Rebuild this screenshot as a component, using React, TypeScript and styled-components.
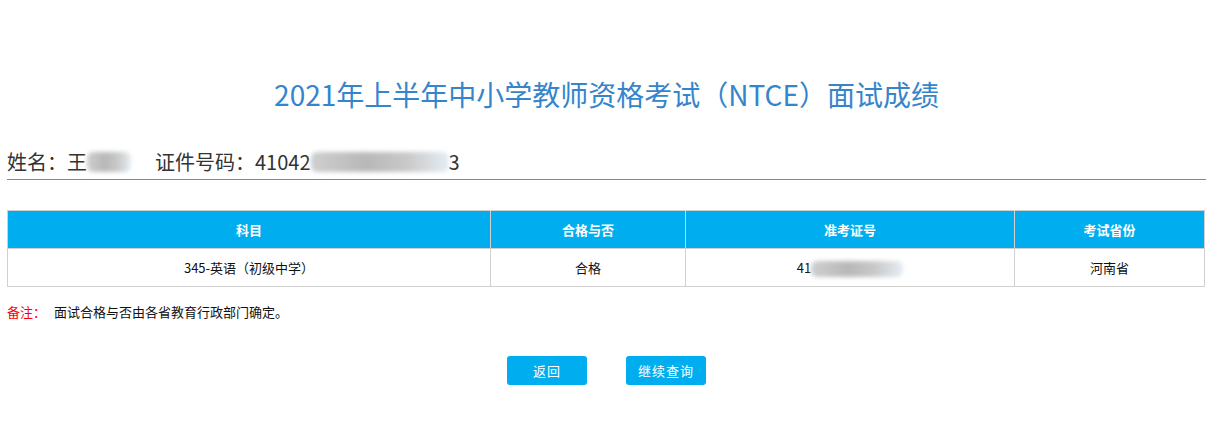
import React from 'react';
import styled, { createGlobalStyle } from 'styled-components';

const GlobalStyle = createGlobalStyle`
  body {
    margin: 0;
    background: #fff;
    font-family: "Noto Sans CJK SC", "Noto Sans", sans-serif;
    color: #222;
  }
`;

const Page = styled.div`
  width: 1199px;
  margin-left: 7px;
  padding-top: 74px;
`;

const Title = styled.h1`
  margin: 0;
  text-align: center;
  font-size: 28px;
  font-weight: normal;
  line-height: 40px;
  color: #3485cc;
`;

const InfoBar = styled.div`
  margin-top: 34px;
  display: flex;
  align-items: center;
  gap: 24px;
  font-size: 20px;
  line-height: 28px;
  color: #333;
  padding-bottom: 3px;
  border-bottom: 1px solid #4a9ccd;
`;

const InfoItem = styled.span`
  display: inline-flex;
  align-items: center;
  white-space: nowrap;
`;

const Blur = styled.span<{ $w: number }>`
  display: inline-block;
  width: ${p => p.$w}px;
  height: 20px;
  background: linear-gradient(90deg, #cfcfcf, #b8b8b8 40%, #c9c9c9 70%, #e6eef4);
  filter: blur(2px);
  border-radius: 6px;
  vertical-align: middle;
`;

const Table = styled.table`
  margin-top: 30px;
  width: 1198px;
  border-collapse: collapse;
  font-size: 13px;
  table-layout: fixed;
`;

const Th = styled.th<{ $w?: number }>`
  width: ${p => (p.$w ? `${p.$w}px` : 'auto')};
  height: 37px;
  background: #00aeef;
  color: #fff;
  font-weight: bold;
  border: 1px solid #d0d0d0;
  text-align: center;
  padding: 0;
`;

const Td = styled.td`
  height: 37px;
  border: 1px solid #d0d0d0;
  text-align: center;
  color: #111;
  padding: 0;
`;

const Note = styled.p`
  margin: 16px 0 0;
  font-size: 13px;
  line-height: 18px;
  color: #111;
`;

const NoteLabel = styled.span`
  color: #f00;
  margin-right: 8px;
`;

const Actions = styled.div`
  margin-top: 35px;
  display: flex;
  justify-content: center;
  gap: 39px;
`;

const Btn = styled.button`
  width: 80px;
  height: 29px;
  border: none;
  border-radius: 3px;
  background: #00aeef;
  color: #fff;
  font-family: inherit;
  font-size: 13px;
  letter-spacing: 1px;
  cursor: pointer;
  padding: 0;
`;

export default function App() {
  return (
    <>
      <GlobalStyle />
      <Page>
        <Title>2021年上半年中小学教师资格考试（NTCE）面试成绩</Title>
        <InfoBar>
          <InfoItem>
            姓名：王<Blur $w={44} />
          </InfoItem>
          <InfoItem>
            证件号码：41042<Blur $w={138} />3
          </InfoItem>
        </InfoBar>
        <Table>
          <thead>
            <tr>
              <Th $w={482}>科目</Th>
              <Th $w={194}>合格与否</Th>
              <Th $w={328}>准考证号</Th>
              <Th>考试省份</Th>
            </tr>
          </thead>
          <tbody>
            <tr>
              <Td>345-英语（初级中学）</Td>
              <Td>合格</Td>
              <Td>
                41<Blur $w={92} style={{ height: 16 }} />
              </Td>
              <Td>河南省</Td>
            </tr>
          </tbody>
        </Table>
        <Note>
          <NoteLabel>备注：</NoteLabel>面试合格与否由各省教育行政部门确定。
        </Note>
        <Actions>
          <Btn>返回</Btn>
          <Btn>继续查询</Btn>
        </Actions>
      </Page>
    </>
  );
}
